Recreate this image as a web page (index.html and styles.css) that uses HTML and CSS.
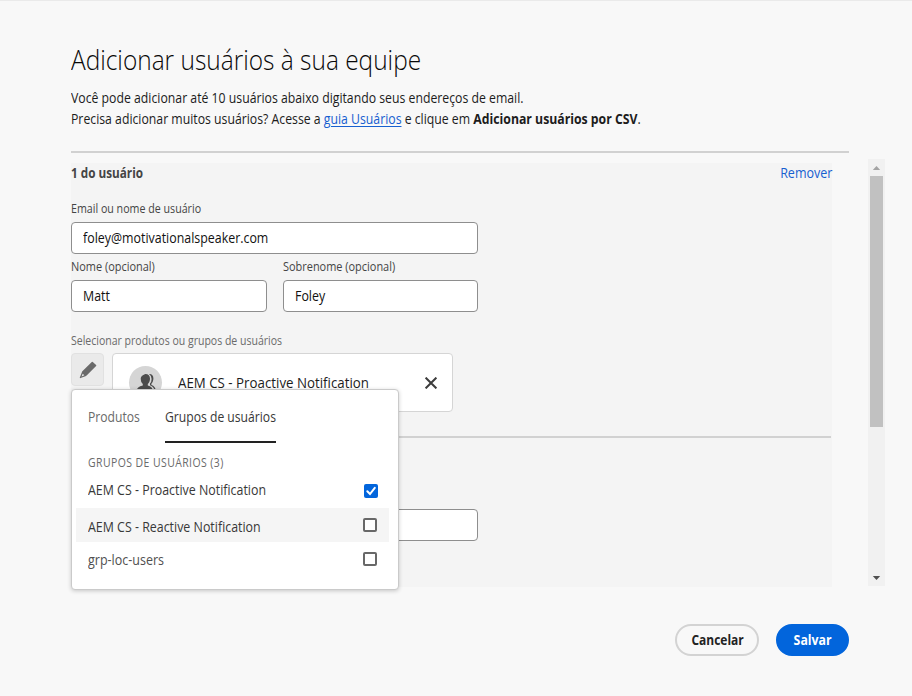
FILE: index.html
```html
<!DOCTYPE html>
<html lang="pt-BR">
<head>
<meta charset="utf-8">
<title>Adicionar usuários à sua equipe</title>
<link rel="stylesheet" href="styles.css">
</head>
<body>
<main class="dialog">
  <h1>Adicionar usuários à sua equipe</h1>
  <p class="intro">Você pode adicionar até 10 usuários abaixo digitando seus endereços de email.<br>Precisa adicionar muitos usuários? Acesse a <a href="#">guia Usuários</a> e clique em <b>Adicionar usuários por CSV</b>.</p>
  <hr class="rule">
  <div class="scroller">
    <section class="panel">
      <div class="user-head"><h2>1 do usuário</h2><a class="remove">Remover</a></div>
      <div class="label email-label">Email ou nome de usuário</div>
      <div class="input"><span>foley@motivationalspeaker.com</span></div>
      <div class="names">
        <div class="name"><div class="label wide">Nome (opcional)</div><div class="input"><span>Matt</span></div></div>
        <div class="name"><div class="label wide">Sobrenome (opcional)</div><div class="input"><span>Foley</span></div></div>
      </div>
      <div class="label select-label">Selecionar produtos ou grupos de usuários</div>
      <div class="products">
        <div class="edit">
          <svg width="18" height="18" viewBox="0 0 18 18"><path fill="#6a6a6a" fill-rule="evenodd" d="M12.8.9 3.6 10.1Q3.1 10.6 2.8 11.4L.8 16.4Q.6 17.3 1.5 17.1L6.5 15.2Q7.3 14.9 7.9 14.3L17.1 5.1Q17.6 4.6 17.1 4.1L13.8.9Q13.3.5 12.8.9ZM2.6 15.4 3.7 12.7 5.3 14.3Z"/></svg>
        </div>
        <div class="card">
          <div class="avatar"><svg width="22" height="20" viewBox="0 0 22 20"><path fill="#4b4b4b" d="M14 1.1C16.8.9 18.4 2.7 18.4 5.5 18.4 7.7 17.6 9.6 16.4 10.7V12Q20.6 13.3 20.8 18H19.4Q19.2 13.8 15 12.3V10.6Q16.6 8.8 16.6 6 16.6 2.8 14 1.1Z"/><path fill="#4b4b4b" d="M10.3 1C13.4 1 15 2.9 15 5.7 15 7.9 14.1 9.8 12.8 10.9V12.4Q17.7 13.6 18 18H1.6Q1.8 13.6 7.8 12.4V10.9Q5.7 9.3 5.7 5.7 5.7 2.9 10.3 1Z"/></svg></div>
          <span class="card-name">AEM CS - Proactive Notification</span>
          <svg class="close" width="12" height="12" viewBox="0 0 12 12"><path d="M.6.6 11.4 11.4M11.4.6.6 11.4" stroke="#3c3c3c" stroke-width="2" fill="none"/></svg>
        </div>
        <div class="popover">
          <div class="tabs"><div class="tab products-tab"><span>Produtos</span></div><div class="tab active"><span>Grupos de usuários</span></div></div>
          <div class="group-title">GRUPOS DE USUÁRIOS (3)</div>
          <div class="option first"><span>AEM CS - Proactive Notification</span>
            <i class="check checked"><svg width="14" height="14" viewBox="0 0 14 14"><path d="M3.3 7.2 6 10 10.8 3.9" stroke="#fff" stroke-width="2" fill="none" stroke-linecap="round"/></svg></i></div>
          <div class="option hover"><span>AEM CS - Reactive Notification</span><i class="check"></i></div>
          <div class="option last"><span>grp-loc-users</span><i class="check"></i></div>
        </div>
      </div>
      <hr class="rule divider">
      <div class="input next-input"></div>
    </section>
    <div class="scrollbar">
      <svg width="17" height="17" viewBox="0 0 17 17"><path fill="#a3a3a3" d="M4.8 11 8.5 7 12.2 11Z"/></svg>
      <div class="thumb"></div>
      <svg class="down" width="17" height="17" viewBox="0 0 17 17"><path fill="#505050" d="M4.8 7 8.5 11 12.2 7Z"/></svg>
    </div>
  </div>
  <footer class="actions"><button class="btn cancel"><span>Cancelar</span></button><button class="btn save"><span>Salvar</span></button></footer>
</main>
</body>
</html>
```
FILE: styles.css
```css
* { box-sizing: border-box; }
body {
  margin: 0;
  height: 696px;
  overflow: hidden;
  background: #f8f8f8;
  border-top: 1px solid #eaeaea;
  color: #1c1c1c;
  font: 14px/21px "Open Sans", sans-serif;
}
.dialog { padding: 39px 27px 0 71px; }

/* Narrowed lettering */
h1, h2, .intro, .remove, .label, .input span, .card-name, .tab span, .group-title, .option span, .btn span {
  white-space: nowrap;
  transform: scaleX(var(--narrow, .886));
  transform-origin: left;
}
.input span, .tab span, .btn span { display: inline-block; }

h1 {
  --narrow: .873;
  margin: 0;
  font-size: 28px;
  line-height: 38px;
  font-weight: 300;
  color: #080808;
}
.intro { --narrow: .8755; margin: 9px 0 0; line-height: 21px; }
.intro a { color: #1760d0; text-decoration: underline; text-underline-offset: 2px; }
.intro b { font-weight: 700; }
.rule { height: 2px; margin: 22px 0 0; border: 0; background: #d1d1d1; width: 778px; }
.scroller { display: flex; height: 428px; margin-top: 6px; justify-content: space-between; }
.panel { width: 761px; margin: 4px 0 0; height: 424px; background: #f4f4f4; }
.user-head { display: flex; justify-content: space-between; line-height: 20px; }
.user-head h2 { --narrow: .838; margin: 0; font-size: 14px; color: #444; }
.remove { --narrow: .895; color: #1760d0; transform-origin: right; }
.label { --narrow: .889; font-size: 12px; line-height: 17px; color: #444; }
.label.wide { --narrow: .912; }
.email-label { margin: 17px 0 5px; }
.input {
  width: 407px;
  height: 32px;
  padding: 0 11px;
  border: 1px solid #8e8e8e;
  border-radius: 4px;
  background: #fff;
  line-height: 29px;
  color: #111;
}
.names { display: flex; gap: 16px; width: 407px; margin-top: 4px; }
.name { flex: 1; }
.name .input { width: 100%; margin-top: 5px; }
.select-label { --narrow: .877; margin-top: 20px; color: #6a6a6a; }
.products { position: relative; display: flex; gap: 8px; margin-top: 4px; }
.edit {
  display: flex;
  align-items: center;
  justify-content: center;
  width: 33px;
  height: 33px;
  border: 1px solid #e1e1e1;
  border-radius: 4px;
  background: #eaeaea;
}
.card {
  display: flex;
  align-items: center;
  width: 341px;
  height: 59px;
  padding: 0 15px 0 16px;
  border: 1px solid #d5d5d5;
  border-radius: 4px;
  background: #fff;
}
.avatar { display: flex; align-items: center; justify-content: center; width: 33px; height: 33px; border-radius: 50%; background: #d5d5d5; }
.card-name { --narrow: .887; flex: 1; margin-left: 15.5px; font-size: 15px; margin-top: -1px; }
.popover {
  position: absolute;
  left: 0;
  top: 36px;
  width: 328px;
  height: 201px;
  padding: 0 9px 0 4px;
  background: #fff;
  border: 1px solid #cacaca;
  border-radius: 4px;
  box-shadow: 0 1px 4px rgba(0, 0, 0, .2);
  color: #383838;
}
.tabs { display: flex; gap: 24px; padding: 17px 12px 0; }
.tab { --narrow: .868; width: 111px; height: 36px; line-height: 20px; color: #6a6a6a; border-bottom: 2px solid transparent; }
.products-tab { width: 53px; }
.tab.active { color: #383838; border-color: #222; }
.group-title { --narrow: .87; margin: 11px 12px 0; font-size: 12px; line-height: 18px; letter-spacing: .5px; color: #6a6a6a; }
.option { display: flex; align-items: center; justify-content: space-between; height: 34px; padding: 0 12px; }
.option.first { height: 36px; padding: 0 11px 0 12px; }
.first span { margin-top: -2px; }
.option.hover { background: #f5f5f5; }
.hover span { margin-top: 2px; }
.option.last { --narrow: .893; color: #505050; }
.check { width: 14px; height: 14px; border: 2px solid #686868; border-radius: 2px; background: #fff; }
.check.checked { border: 0; background: #0265dc; margin-top: 1px; }
.check svg { display: block; }
.divider { width: 760px; margin-top: 24px; }
.next-input { margin-top: 71px; }
.scrollbar { width: 17px; display: flex; flex-direction: column; background: #f1f1f1; margin-bottom: 1px; }
.scrollbar svg { flex: none; }
.thumb { width: 13px; height: 251px; margin: 0 2px; background: #c1c1c1; }
.down { margin-top: auto; }
.actions { display: flex; gap: 17px; justify-content: flex-end; margin: 37px 36px 0 0; }
.btn {
  height: 32px;
  border: 2px solid #d3d3d3;
  border-radius: 17px;
  padding: 0;
  background: transparent;
  font: bold 14px/26px "Open Sans", sans-serif;
  color: #222;
}
.btn span { transform-origin: center; }
.cancel { --narrow: .855; width: 84px; padding-left: 1px; }
.save { --narrow: .88; width: 73px; background: #0265dc; border-color: #0265dc; color: #fff; }
```
